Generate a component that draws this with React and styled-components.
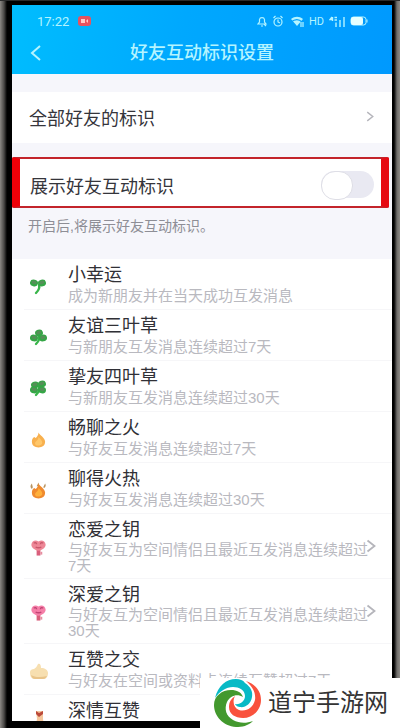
import styled, { createGlobalStyle } from "styled-components";

const GlobalStyle = createGlobalStyle`
  * {
    box-sizing: border-box;
  }

  body {
    margin: 0;
    background: #000;
    font-family: "Liberation Sans", "Noto Sans CJK SC", sans-serif;
  }
`;

const Device = styled.div`
  position: relative;
  height: 100vh;
  overflow: hidden;
  display: flex;
  flex-direction: column;
  padding: 4px 8px 7px 12px;
  background: linear-gradient(90deg, #8b8884 0, #4a4846 4px, #000 7px, #000 calc(100% - 6px), #6f6d6a calc(100% - 3px), #8c8985 100%);
  border-top: 1px solid #2b2b2b;
`;

const Screen = styled.main`
  flex: 1;
  min-height: 0;
  overflow: hidden;
  background: #f6f6fb;
`;

const Header = styled.header`
  height: 69px;
  color: #b4f4ff;
  background: linear-gradient(100deg, #00bdfe 0%, #00a8fe 45%, #0099fe 100%);
`;

const StatusBar = styled.div`
  display: flex;
  align-items: center;
  justify-content: space-between;
  height: 32px;
  padding: 0 24px 0 25px;
  font-family: Roboto, sans-serif;
  font-size: 13px;
`;

const StatusGroup = styled.div`
  display: flex;
  align-items: center;
  gap: ${(props) => props.$gap}px;
`;

const Recording = styled.span`
  display: flex;
  align-items: center;
  justify-content: center;
  width: 13px;
  height: 10px;
  border-radius: 3px;
  background: #e8525f;
`;

const Network = styled.span`
  font-size: 11px;
`;

const NavBar = styled.div`
  display: grid;
  grid-template-columns: 48px 1fr 48px;
  align-items: center;
  height: 32px;
`;

const BackButton = styled.button`
  display: flex;
  justify-content: center;
  padding: 0;
  border: 0;
  background: none;
  color: inherit;
`;

const Title = styled.h1`
  margin: 0;
  text-align: center;
  font-size: 18px;
  font-weight: 500;
  line-height: 24px;
`;

const LinkRow = styled.a`
  display: flex;
  align-items: center;
  justify-content: space-between;
  height: 51px;
  margin: 18px 0 14px;
  padding: 0 17px 2px;
  background: #fff;
  color: #35353b;
  font-size: 18px;
  text-decoration: none;
`;

const SwitchRow = styled.label`
  display: flex;
  align-items: center;
  justify-content: space-between;
  height: 51px;
  margin-right: 3px;
  padding: 4px 7px 0 10px;
  border: solid #c3242b;
  border-width: 2px 8px;
  border-left-color: #f00008;
  border-right-color: #e60a12;
  border-radius: 2px;
  background: #fff;
  color: #35353b;
  font-size: 18px;
`;

const Switch = styled.input`
  appearance: none;
  display: flex;
  width: 53px;
  height: 27px;
  margin: 0;
  border-radius: 14px;
  background: #e9e9f2;

  &::before {
    content: "";
    width: 30px;
    height: 27px;
    border: 1px solid #dedee6;
    border-radius: 14px;
    background: #fff;
  }

  &:checked {
    justify-content: flex-end;
    background: #12b7f5;
  }
`;

const Hint = styled.p`
  margin: 0;
  padding: 7px 16px 22px;
  color: #8e8e96;
  font-size: 14px;
  line-height: 22px;
`;

const List = styled.ul`
  margin: 0;
  padding: 0;
  list-style: none;
  background: #fff;
`;

const Item = styled.li`
  display: flex;
  align-items: center;
  min-height: 51px;
  margin-left: 12px;
  padding: 4px 16px 4px 6px;
  border-bottom: 1px solid #f6f6f8;
`;

const IconBox = styled.span`
  display: flex;
  flex: none;
  width: 38px;
  padding-top: 4px;
`;

const ItemText = styled.div`
  flex: 1;
  align-self: flex-start;
  min-width: 0;
`;

const ItemTitle = styled.h2`
  margin: 0;
  color: #303036;
  font-size: 18px;
  font-weight: 400;
  line-height: 24px;
`;

const ItemDesc = styled.p`
  margin: 0;
  margin-right: -4px;
  color: #b9b9bf;
  font-size: 15px;
  line-height: ${(props) => (props.$tall ? 16 : 18)}px;
`;

const Watermark = styled.aside`
  position: absolute;
  right: 0;
  bottom: 0;
  display: flex;
  align-items: center;
  gap: 6px;
  height: 50px;
  padding: 0 12px 0 14px;
  background: #fff;
  color: #333;
  font-size: 24px;
  line-height: 32px;
`;

const Chevron = ({ size = 14 }) => (
  <svg width="10" height={size} viewBox="0 0 10 14" fill="none" stroke="#b5b5bb" strokeWidth="1.8">
    <path d="M1.5 1.5 8.5 7l-7 5.5" />
  </svg>
);

const leaves = {
  2: [[4, 6, 15], [12, 6, -15]],
  3: [[4, 10, 10], [9, 5, -20], [13, 10, -10]],
  4: [[5, 6, -20], [12, 5, -20], [4, 11, 10], [12, 11, 10]],
};

const Clover = ({ count }) => (
  <svg width="17" height="18" viewBox="0 0 17 18">
    <path d="M9 8c1 3 0 5-3 8" fill="none" stroke="#38b54a" strokeWidth="2.4" strokeLinecap="round" />
    {leaves[count].map(([x, y, turn]) => (
      <g key={`${x}-${y}`} transform={`rotate(${turn} ${x} ${y})`}>
        <ellipse cx={x} cy={y} rx="4" ry="3.4" fill="#35a646" />
        <ellipse cx={x} cy={y - 0.6} rx="2.6" ry="1.7" fill="#568f58" />
      </g>
    ))}
  </svg>
);

const Fire = ({ hot }) => (
  <svg width="17" height="20" viewBox="0 0 18 20">
    {hot && <path d="M2 9C0 7 0 5 2 3l1 4M15 8c2-2 2-3 1-5l-2 4M7 6 9 2l1 4" fill="#b8935f" />}
    <path d="M9 3c1 3 7 5 7 10 0 4-3 6-7 6s-7-2-7-6c0-3 1-4 2.500-5L6 9c1-1 3-3 3-6z" fill={hot ? "#ef8a2f" : "#f8b04e"} />
    <path d="M9 8c2 2 4 4 4 6 0 2-2 3-5 3s-3-3-2-4 3-2 3-5z" fill={hot ? "#ffb03b" : "#ffc76a"} />
  </svg>
);

const HeartKey = ({ deep }) => (
  <svg width="17" height="20" viewBox="0 0 18 20">
    <path d="M7 9h4v9H7z" fill="#d95f7c" />
    <path d="M11 14h2v3h-2z" fill="#e68c9f" />
    <path d="M9 13C4 12 1 9 1.500 6 2 2 6 1 9 3c3-2 7-1 7.500 3C17 9 14 12 9 13z" fill={deep ? "#f57fa8" : "#ee8796"} />
    <path d="M4 5c1-1 3-1 3 1M14 5c-1-1-3-1-3 1M6 9c2 1 4 1 6 0" fill="none" stroke={deep ? "#c24474" : "#c9576b"} strokeWidth="1.500" />
  </svg>
);

const Thumb = () => (
  <svg width="18" height="18" viewBox="0 0 18 18">
    <path d="M0 10c0-2 2-3 4-3 2-1 3-3 4-5 2-1 3 1 3 4 4 0 7 2 7 5 0 4-2 6-5 6H5c-4 0-5-3-5-7z" fill="#f7dfb0" />
    <path d="M1 13c3 2 9 3 16 1-1 2-2 3-4 3H5c-2 0-3-1-4-4z" fill="#e9c48a" />
  </svg>
);

const Gift = () => (
  <svg width="18" height="24" viewBox="0 0 18 24">
    <path d="M6 1h7v8l2 14H4l3-14z" fill="#f5c79d" />
    <path d="m6 1 3 2 4-2v3L9 7 6 4z" fill="#bb4a3a" />
  </svg>
);

const StatusIcons = () => (
  <svg width="47" height="13" viewBox="0 0 47 13" fill="none" stroke="currentColor" strokeWidth="1.200">
    <path d="M1 9h8L7.500 7V4.500C7 2 3 2 2.500 4.500V7zM4 11h2M7 9l2 2" />
    <circle cx="21" cy="7" r="4" />
    <path d="M21 4.500V7l2 1M16.500 3l2-2M23.500 1l2 2" />
    <path d="M34 4c4-3 8-3 12 0l-6 7z" fill="currentColor" stroke="none" />
    <path d="M34 7c4-3 8-3 11 0" stroke="#00a0fe" />
    <path d="M44 7v5M46 7v5" />
  </svg>
);

const Signal = () => (
  <svg width="16" height="11" viewBox="0 0 16 11" fill="none" stroke="currentColor" strokeWidth="1.400">
    <path d="M3 1 1 3.500h3M3.500 1v4M5.500 1.500H8M5.500 4H8M7 6.500V11M11 4v7M15 1v10" />
  </svg>
);

const Battery = () => (
  <svg width="18" height="10" viewBox="0 0 18 10">
    <rect x="1" y="1" width="15" height="8" rx="2.500" fill="none" stroke="currentColor" />
    <rect x="1" y="1" width="12" height="8" rx="2" fill="#e6ffff" />
    <path d="M17 3.500v3" stroke="currentColor" />
  </svg>
);

const Logo = () => (
  <svg width="48" height="48" viewBox="0 0 48 48">
    <path d="M1 19C4 7 12 0 22 0c4 0 7 1 9 4 6 4 8 9 7 14-1 7-7 11-12 10-2 0-4-1-5-3 5 1 10-3 10-8 0-6-6-9-12-9C12 8 6 12 1 19z" fill="#08bac6" />
    <path d="M32 2c9 3 15 10 15 19 0 10-8 18-18 18-8 0-14-4-14-11 0-5 2-8 6-11-3 6-1 12 4 14 7 2 14-2 16-10 1-7-2-13-9-19z" fill="#f9523d" />
    <path d="M39 42c-5 5-11 6-17 6C9 47 0 37 0 26c0-9 8-15 17-15 6 0 10 2 12 7-6-4-13-1-16 5-3 7-1 14 6 18 6 3 12 4 20 1z" fill="#43992e" />
  </svg>
);

const items = [
  { title: "小幸运", desc: "成为新朋友并在当天成功互发消息", icon: <Clover count={2} /> },
  { title: "友谊三叶草", desc: "与新朋友互发消息连续超过7天", icon: <Clover count={3} /> },
  { title: "挚友四叶草", desc: "与新朋友互发消息连续超过30天", icon: <Clover count={4} /> },
  { title: "畅聊之火", desc: "与好友互发消息连续超过7天", icon: <Fire /> },
  { title: "聊得火热", desc: "与好友互发消息连续超过30天", icon: <Fire hot /> },
  { title: "恋爱之钥", desc: "与好友互为空间情侣且最近互发消息连续超过7天", icon: <HeartKey />, more: true },
  { title: "深爱之钥", desc: "与好友互为空间情侣且最近互发消息连续超过30天", icon: <HeartKey deep />, more: true },
  { title: "互赞之交", desc: "与好友在空间或资料卡连续互赞超过7天", icon: <Thumb /> },
  { title: "深情互赞", icon: <Gift /> },
];

function App() {
  return (
    <Device>
      <GlobalStyle />
      <Screen>
        <Header>
          <StatusBar>
            <StatusGroup $gap={9}>
              <span>17:22</span>
              <Recording>
                <svg width="7" height="4" viewBox="0 0 7 4">
                  <path d="M0 0h4v4H0zM5 2l2-2v4z" fill="#ffc9c6" />
                </svg>
              </Recording>
            </StatusGroup>
            <StatusGroup $gap={5}>
              <StatusIcons />
              <Network>HD</Network>
              <Signal />
              <Battery />
            </StatusGroup>
          </StatusBar>
          <NavBar>
            <BackButton aria-label="返回">
              <svg width="12" height="16" viewBox="0 0 12 16" fill="none" stroke="currentColor" strokeWidth="2">
                <path d="M10 1 2 8l8 7" />
              </svg>
            </BackButton>
            <Title>好友互动标识设置</Title>
          </NavBar>
        </Header>
        <LinkRow href="#all">
          全部好友的标识
          <Chevron size={11} />
        </LinkRow>
        <SwitchRow>
          展示好友互动标识
          <Switch type="checkbox" role="switch" />
        </SwitchRow>
        <Hint>开启后,将展示好友互动标识。</Hint>
        <List>
          {items.map((item) => (
            <Item key={item.title}>
              <IconBox>{item.icon}</IconBox>
              <ItemText>
                <ItemTitle>{item.title}</ItemTitle>
                {item.desc && <ItemDesc $tall={item.more}>{item.desc}</ItemDesc>}
              </ItemText>
              {item.more && <Chevron />}
            </Item>
          ))}
        </List>
      </Screen>
      <Watermark>
        <Logo />
        道宁手游网
      </Watermark>
    </Device>
  );
}

export default App;
